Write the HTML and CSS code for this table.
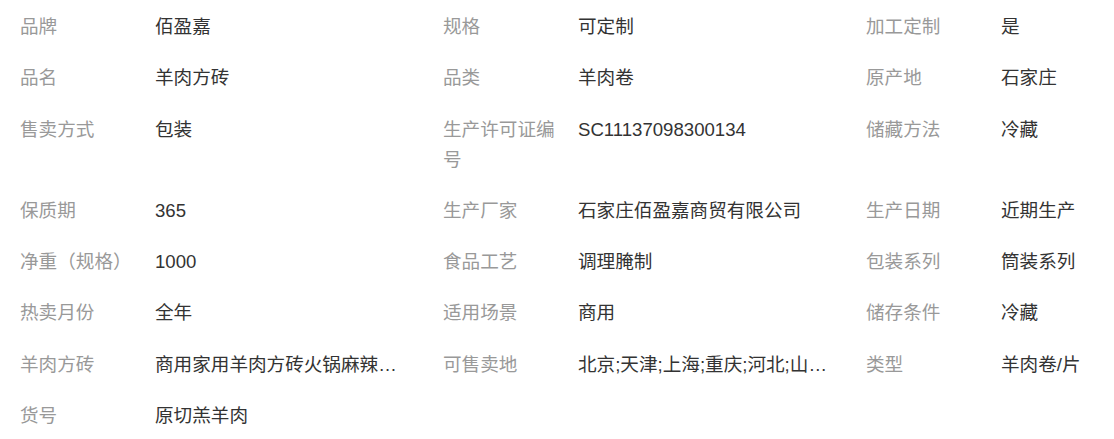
FILE: index.html
```html
<!DOCTYPE html>
<html lang="zh-CN">
<head>
    <meta charset="UTF-8">
    <meta name="viewport" content="width=device-width, initial-scale=1.0">
    <title>商品参数</title>
    <link rel="stylesheet" href="styles.css">
</head>
<body>
    <div class="attrs">
        <ul class="attr-list">
            <li class="attr"><span class="attr-name">品牌</span><span class="attr-value">佰盈嘉</span></li>
            <li class="attr"><span class="attr-name">规格</span><span class="attr-value">可定制</span></li>
            <li class="attr"><span class="attr-name">加工定制</span><span class="attr-value">是</span></li>

            <li class="attr"><span class="attr-name">品名</span><span class="attr-value">羊肉方砖</span></li>
            <li class="attr"><span class="attr-name">品类</span><span class="attr-value">羊肉卷</span></li>
            <li class="attr"><span class="attr-name">原产地</span><span class="attr-value">石家庄</span></li>

            <li class="attr"><span class="attr-name">售卖方式</span><span class="attr-value">包装</span></li>
            <li class="attr"><span class="attr-name">生产许可证编号</span><span class="attr-value">SC11137098300134</span></li>
            <li class="attr"><span class="attr-name">储藏方法</span><span class="attr-value">冷藏</span></li>

            <li class="attr"><span class="attr-name">保质期</span><span class="attr-value">365</span></li>
            <li class="attr"><span class="attr-name">生产厂家</span><span class="attr-value">石家庄佰盈嘉商贸有限公司</span></li>
            <li class="attr"><span class="attr-name">生产日期</span><span class="attr-value">近期生产</span></li>

            <li class="attr"><span class="attr-name">净重（规格）</span><span class="attr-value">1000</span></li>
            <li class="attr"><span class="attr-name">食品工艺</span><span class="attr-value">调理腌制</span></li>
            <li class="attr"><span class="attr-name">包装系列</span><span class="attr-value">筒装系列</span></li>

            <li class="attr"><span class="attr-name">热卖月份</span><span class="attr-value">全年</span></li>
            <li class="attr"><span class="attr-name">适用场景</span><span class="attr-value">商用</span></li>
            <li class="attr"><span class="attr-name">储存条件</span><span class="attr-value">冷藏</span></li>

            <li class="attr"><span class="attr-name">羊肉方砖</span><span class="attr-value">商用家用羊肉方砖火锅麻辣烫涮肉食材</span></li>
            <li class="attr"><span class="attr-name">可售卖地</span><span class="attr-value">北京;天津;上海;重庆;河北;山西;内蒙古;辽宁</span></li>
            <li class="attr"><span class="attr-name">类型</span><span class="attr-value">羊肉卷/片</span></li>

            <li class="attr"><span class="attr-name">货号</span><span class="attr-value">原切羔羊肉</span></li>
        </ul>
    </div>
</body>
</html>
```

FILE: styles.css
```css
body, html {
    margin: 0;
    padding: 0;
    background-color: #fff;
    font-family: "Liberation Sans", "Noto Sans CJK SC", sans-serif;
}
.attrs {
    overflow: hidden;
    padding: 12px 0 0 20px;
}
.attr-list {
    list-style: none;
    margin: 0;
    padding: 0;
    display: grid;
    grid-template-columns: 423px 423px 1fr;
    row-gap: 21.3px;
}
.attr {
    display: flex;
    font-size: 18.6px;
    line-height: 30px;
}
.attr-name {
    flex: 0 0 120px;
    margin-right: 15px;
    color: #999;
}
.attr-value {
    width: 254px;
    color: #333;
    white-space: nowrap;
    overflow: hidden;
    text-overflow: ellipsis;
}
```
